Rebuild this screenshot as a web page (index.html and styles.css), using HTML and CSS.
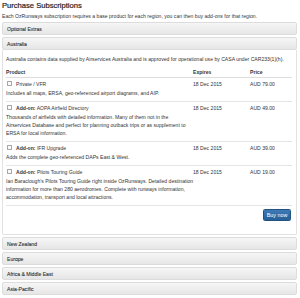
FILE: index.html
```html
<!DOCTYPE html>
<html>
<head>
<meta charset="utf-8">
<link rel="stylesheet" href="styles.css">
</head>
<body>
<div class="page">
  <h3 class="title">Purchase Subscriptions</h3>
  <p class="lead">Each OzRunways subscription requires a base product for each region, you can then buy add-ons for that region.</p>
  <div class="accordion">
    <div class="group">
      <div class="heading">Optional Extras</div>
    </div>
    <div class="group">
      <div class="heading">Australia</div>
      <div class="body">
        <p class="intro">Australia contains data supplied by Airservices Australia and is approved for operational use by CASA under CAR233(1)(h).</p>
        <div class="products">
          <div class="row head"><span>Product</span><span>Expires</span><span>Price</span></div>
          <div class="product">
            <div class="row"><span><i class="cb"></i>Private / VFR</span><span>18 Dec 2015</span><span>AUD 79.00</span></div>
            <p class="desc">Includes all maps, ERSA, geo-referenced airport diagrams, and AIP.</p>
          </div>
          <div class="product">
            <div class="row"><span><i class="cb"></i><b>Add-on:</b> AOPA Airfield Directory</span><span>18 Dec 2015</span><span>AUD 49.00</span></div>
            <p class="desc">Thousands of airfields with detailed information. Many of them not in the Airservices Database and perfect for planning outback trips or as supplement to ERSA for local information.</p>
          </div>
          <div class="product">
            <div class="row"><span><i class="cb"></i><b>Add-on:</b> IFR Upgrade</span><span>18 Dec 2015</span><span>AUD 39.00</span></div>
            <p class="desc">Adds the complete geo-referenced DAPs East &amp; West.</p>
          </div>
          <div class="product">
            <div class="row"><span><i class="cb"></i><b>Add-on:</b> Pilots Touring Guide</span><span>18 Dec 2015</span><span>AUD 19.00</span></div>
            <p class="desc desc-wide">Ian Baraclough's Pilots Touring Guide right inside OzRunways. Detailed destination information for more than 280 aerodromes. Complete with runways information, accommodation, transport and local attractions.</p>
          </div>
        </div>
        <div class="actions"><button class="buy">Buy now</button></div>
      </div>
    </div>
    <div class="group"><div class="heading">New Zealand</div></div>
    <div class="group"><div class="heading">Europe</div></div>
    <div class="group"><div class="heading">Africa &amp; Middle East</div></div>
    <div class="group"><div class="heading">Asia-Pacific</div></div>
  </div>
</div>
</body>
</html>
```

FILE: styles.css
```css
html, body {
  margin: 0;
  padding: 0;
  background: #fff;
}
.page {
  padding: 0 3px 0 2px;
  font-family: "Liberation Sans", Arial, sans-serif;
  font-size: 5.1px;
  line-height: 8px;
  color: #333;
}
.title {
  margin: 0;
  font-size: 7.6px;
  line-height: 11px;
  font-weight: normal;
  color: #222;
  -webkit-text-stroke: 0.2px #222;
}
.lead {
  margin: 1px 0 2px;
}
.accordion {
  display: flex;
  flex-direction: column;
  gap: 2px;
}
.group {
  display: flex;
  flex-direction: column;
}
.heading {
  border: 1px solid #dcdcdc;
  border-radius: 2px;
  background: linear-gradient(#f6f6f6, #e6e6e6);
  padding: 1.5px 4px;
  line-height: 8px;
  color: #2a2a2a;
  -webkit-text-stroke: 0.08px #2a2a2a;
}
.body {
  border: 1px solid #e2e2e2;
  border-top: 0;
  border-radius: 0 0 2px 2px;
  padding: 5px 4px 13px 3px;
}
.intro {
  margin: 0 0 4px;
}
.products {
  display: flex;
  flex-direction: column;
}
.row {
  display: grid;
  grid-template-columns: 187px 57px 1fr;
}
.row.head {
  font-weight: bold;
  padding: 1px 0;
  border-bottom: 1px solid #ddd;
}
.product {
  border-bottom: 1px solid #e4e4e4;
  padding: 2px 0 4px;
}
.product .row {
  padding-bottom: 1px;
}
.desc {
  margin: 0;
  width: 186px;
}
.desc-wide {
  width: 194px;
}
.cb {
  display: inline-block;
  width: 3px;
  height: 3px;
  border: 0.5px solid #a8a8a8;
  border-radius: 0.5px;
  background: #fafafa;
  margin: 0 4px 0 1px;
  vertical-align: 0;
}
.actions {
  display: flex;
  justify-content: flex-end;
  padding-top: 3px;
  padding-right: 1px;
}
.buy {
  width: 28px;
  height: 12px;
  padding: 0;
  border: 1px solid #22527f;
  border-radius: 1.5px;
  background: linear-gradient(#3d7ab5, #275f98);
  color: #fff;
  font-family: "Liberation Sans", Arial, sans-serif;
  font-size: 5.4px;
  line-height: 10px;
}
```
